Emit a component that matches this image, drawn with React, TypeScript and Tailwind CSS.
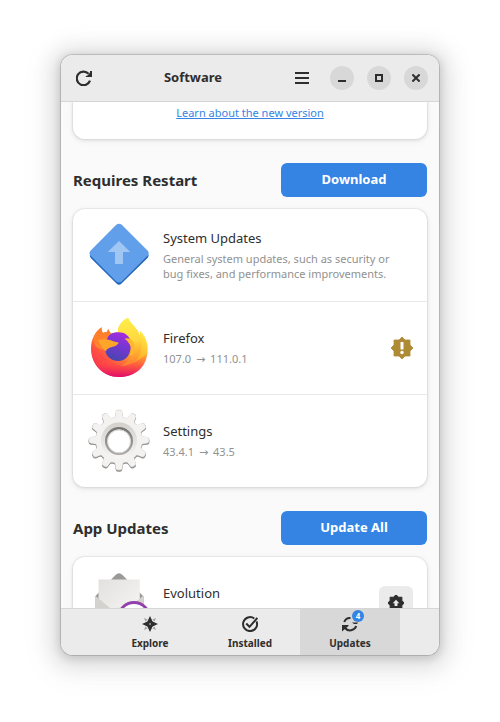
import type { ReactNode } from "react";

const toothAngles = [0, 30, 60, 90, 120, 150, 180, 210, 240, 270, 300, 330];

function ReloadIcon() {
  return (
    <svg viewBox="0 0 16 16" className="size-4" fill="none" aria-hidden="true">
      <path d="M14 10.600A6.800 6.800 0 1 1 12.600 3.800" stroke="#2e2e2e" strokeWidth="2.200" />
      <path d="M16 1v6H9.800V6l1.800-.6L14 2.600V1z" fill="#2e2e2e" />
    </svg>
  );
}

function MenuIcon() {
  return (
    <svg viewBox="0 0 16 16" className="size-4" fill="#2e2e2e" aria-hidden="true">
      <path d="M1 2h14v2H1zM1 7h14v2H1zM1 12h14v2H1z" />
    </svg>
  );
}

function SystemIcon() {
  return (
    <svg viewBox="0 0 64 64" className="size-16 shrink-0" aria-hidden="true">
      <path d="M29.500 3.800q2.500-2.400 5 0L60.300 30q2.600 2.600 0 5.200L34.500 60.600q-2.500 2.400-5 0L4 35.200q-2.400-2.600 0-5.200z" fill="#1f66bd" />
      <path d="M29 2q3-2.600 6 0L60.500 27.600q2.400 2.600 0 5.200L35 58.200q-3 2.600-6 0L3.700 32.800q-2.400-2.600 0-5.200z" fill="#629fea" />
      <path d="M32 18l11.300 11H36v12h-8V29h-7.300z" fill="#a0c6f3" />
    </svg>
  );
}

function FirefoxIcon() {
  return (
    <svg viewBox="0 0 64 64" className="size-16 shrink-0" aria-hidden="true">
      <defs>
        <linearGradient id="fxBody" x1="54" y1="12" x2="16" y2="56" gradientUnits="userSpaceOnUse">
          <stop offset="0" stopColor="#fff04a" />
          <stop offset=".35" stopColor="#ffb92c" />
          <stop offset=".6" stopColor="#ff7a35" />
          <stop offset=".85" stopColor="#ff4548" />
          <stop offset="1" stopColor="#f01a62" />
        </linearGradient>
        <linearGradient id="fxFlame" x1="40" y1="2" x2="48" y2="52" gradientUnits="userSpaceOnUse">
          <stop offset="0" stopColor="#ffee4a" />
          <stop offset=".45" stopColor="#ffd93e" />
          <stop offset=".75" stopColor="#ffa32f" />
          <stop offset="1" stopColor="#ff6a36" />
        </linearGradient>
        <linearGradient id="fxGlobe" x1="38" y1="18" x2="28" y2="44" gradientUnits="userSpaceOnUse">
          <stop offset="0" stopColor="#a52be0" />
          <stop offset=".5" stopColor="#7238cf" />
          <stop offset="1" stopColor="#4a45b0" />
        </linearGradient>
        <linearGradient id="fxLow" x1="32" y1="34" x2="32" y2="61" gradientUnits="userSpaceOnUse">
          <stop offset="0" stopColor="#ff6a30" stopOpacity="0" />
          <stop offset=".55" stopColor="#ff4a43" stopOpacity=".7" />
          <stop offset="1" stopColor="#e00c6c" />
        </linearGradient>
        <linearGradient id="fxHead" x1="14" y1="12" x2="20" y2="34" gradientUnits="userSpaceOnUse">
          <stop offset="0" stopColor="#ff7a2c" />
          <stop offset="1" stopColor="#ff8a2a" />
        </linearGradient>
      </defs>
      <path
        d="M14.600 11.200C14.500 14 15 15.500 16 17c1.500-.8 2.600-1 3.800-1 .2-1 1-2 2-2.700.2 1.800 1.200 3 2.200 4.200 2.200-.8 4.500-.8 7-.8C30.500 10 34.500 5 41 1.700c2 5.300 7 8 10 13.800.8 1.600 1.400 3.100 1.700 4.500.3-2.300.2-3.500-.2-5.500 5.500 4.500 8.200 11.500 8.200 18.500C60.700 49 48.500 61 32.300 61 16 61 4 48.500 4 32.500 4 23.500 8 15.500 14.600 11.200z"
        fill="url(#fxBody)"
      />
      <path d="M4.200 30C10 41 20 48 32 49c13 .5 22-5 28.500-13C60 51 48 61 32.300 61 15.500 61 3.500 48 4.200 30z" fill="url(#fxLow)" />
      <path
        d="M31 17C30.500 10 34.500 5 41 1.700c2 5.300 7 8 10 13.800 3.500 7 4 13.500 2.500 19.500C51 44.500 43 50.500 33 50c8-3 12.500-8 13-15C46.500 28 43 20 31 17z"
        fill="url(#fxFlame)"
      />
      <path d="M19.500 29c-1.500-6 2-11.500 7.500-12.300 4.500-.9 9.500-.5 12.500 2 4.500 3.500 5.500 9.300 4 14.800C42 41 37.500 45 31.500 45c-7 0-12.500-4.500-13.200-10.500-.2-2 .2-4 1.200-5.500z" fill="url(#fxGlobe)" />
      <path d="M37.500 23c2.500-1.300 5.500-.6 7.500 1.500 3.500 4 3.300 9.500.7 14.500-1 .5-2.500.5-3 0 2-5 1.600-9-1.700-13-.8-1.400-2-2.500-3.500-3z" fill="#ffb52e" />
      <path
        d="M11 24c3.500-1 7-.9 10.500-.3 3 .6 6.500 2.300 10.200 2.800-1 2.500-3 3.600-6 4.300-3.500.8-5.500 2-7 4.500C15.500 32 12.500 29 11 24z"
        fill="#ffa62a"
      />
      <path d="M14.600 11.200C14.500 14 15 15.500 16 17c1.500-.8 2.600-1 3.800-1 .2-1 1-2 2-2.700.2 1.800 1.200 3 2.200 4.200-3 2-4 4-3.800 6-3-.6-6-.3-9.200.5 1 4 3.500 7 6.500 10C9.500 33 6 29 6.500 22 8 17 10.500 14 14.600 11.200z" fill="url(#fxHead)" />
    </svg>
  );
}

function GearTeeth({ fill, dy }: { fill: string; dy: number }) {
  return (
    <g fill={fill} transform={`translate(0 ${dy})`}>
      {toothAngles.map((a) => (
        <path
          key={a}
          transform={`rotate(${a} 32 31)`}
          d="M26 9.500q2-.6 2.300-3l.4-3.500Q29 .6 31 .6h2q2 0 2.300 2.400l.4 3.500q.3 2.400 2.300 3z"
        />
      ))}
      <circle cx="32" cy="31" r="23.500" />
    </g>
  );
}

function SettingsIcon() {
  return (
    <svg viewBox="0 0 64 64" className="size-16 shrink-0" aria-hidden="true">
      <defs>
        <linearGradient id="gearRing" x1="0" y1="0" x2="0" y2="1">
          <stop offset="0" stopColor="#d3d0cc" />
          <stop offset=".5" stopColor="#e4e2df" />
          <stop offset="1" stopColor="#f6f5f4" />
        </linearGradient>
        <linearGradient id="gearEdge" x1="0" y1="0" x2="0" y2="1">
          <stop offset="0" stopColor="#777572" />
          <stop offset="1" stopColor="#a9a7a4" />
        </linearGradient>
      </defs>
      <GearTeeth fill="#8f8d8a" dy={1.4} />
      <GearTeeth fill="#c5c3c0" dy={0.2} />
      <g transform="translate(.6 .6) scale(.981)">
        <GearTeeth fill="#f3f2f0" dy={0} />
      </g>
      <circle cx="32" cy="31.500" r="18" fill="url(#gearRing)" />
      <circle cx="32" cy="32" r="12.800" fill="#fff" stroke="url(#gearEdge)" strokeWidth="2.400" />
      <circle cx="32" cy="32.500" r="11.500" fill="none" stroke="#d8d7d5" strokeWidth="1" />
    </svg>
  );
}

function EvolutionIcon() {
  return (
    <svg viewBox="0 0 64 64" className="size-16 shrink-0" aria-hidden="true">
      <defs>
        <linearGradient id="letter" x1="0" y1="0" x2="1" y2="1">
          <stop offset="0" stopColor="#e2e1de" />
          <stop offset="1" stopColor="#f7f6f5" />
        </linearGradient>
      </defs>
      <path d="M8 25.500 28.500 4q3.500-3.500 7 0L56.500 25.500V54H8z" fill="#9a9996" />
      <path d="M11.500 8.500h41.300V46H11.500z" fill="url(#letter)" />
      <path d="M8 24.500l24 20 24.500-20V56q0 4-4 4H12q-4 0-4-4z" fill="#d3d2ce" />
      <path d="M8 56l20.500-18.500q3.500-2.500 7 0L56.500 56q0 4-4 4H12q-4 0-4-4z" fill="#e6e5e2" />
      <circle cx="47" cy="47" r="15.500" fill="#fff" stroke="#9141ac" strokeWidth="2.800" />
      <path d="M47 39v8l5 3" fill="none" stroke="#9141ac" strokeWidth="2" />
    </svg>
  );
}

const badgePath = "M11 0l3 3h5v5l3 3-3 3v5h-5l-3 3-3-3H3v-5l-3-3 3-3V3h5z";

function WarningIcon() {
  return (
    <svg viewBox="0 0 22 22" className="size-[22px] shrink-0" role="img" aria-label="Warning">
      <path d={badgePath} fill="#ae8a34" stroke="#ae8a34" strokeWidth=".8" strokeLinejoin="round" />
      <path d="M9.500 5h3v7.500h-3z" fill="#fff" />
      <circle cx="11" cy="15.500" r="1.700" fill="#fff" />
    </svg>
  );
}

function InstallIcon() {
  return (
    <svg viewBox="0 0 22 22" className="size-4" aria-hidden="true">
      <path d={badgePath} fill="#2e2e2e" stroke="#2e2e2e" strokeWidth="1.500" strokeLinejoin="round" />
      <path d="M11 6.500l4.500 5h-2.500V15H9v-3.500H6.500z" fill="#ebebeb" />
    </svg>
  );
}

function ExploreIcon() {
  return (
    <svg viewBox="0 0 16 16" className="size-4" aria-hidden="true">
      <path d="M2 2l3.500 1.500-2 2zM14 2l-1.500 3.500-2-2zM2 14l1.500-3.500 2 2zM14 14l-3.500-1.500 2-2z" fill="#a0a0a0" />
      <path d="M8 0l2.600 5.400L16 8l-5.400 2.600L8 16l-2.600-5.400L0 8l5.400-2.600z" fill="#2e2e2e" />
      <circle cx="8" cy="8" r=".8" fill="#ebebeb" />
    </svg>
  );
}

function InstalledIcon() {
  return (
    <svg viewBox="0 0 16 16" className="size-4" fill="none" stroke="#2e2e2e" strokeWidth="2" aria-hidden="true">
      <path d="M14.500 5.300A7 7 0 1 1 12.300 2.500" />
      <path d="M4.200 7.500l3.300 3.300L15.300 2" />
    </svg>
  );
}

function UpdatesIcon() {
  return (
    <svg viewBox="0 0 16 16" className="size-4" fill="none" aria-hidden="true">
      <path d="M2.200 6A6.200 6.200 0 0 1 8.500 2" stroke="#2e2e2e" strokeWidth="2" />
      <path d="M10 6.500h6L15 8h-3z" fill="#2e2e2e" />
      <path d="M14.200 10A6.500 6.500 0 0 1 3 12" stroke="#2e2e2e" strokeWidth="2" />
      <path d="M0 15.500V9h6.500v1z" fill="#2e2e2e" />
    </svg>
  );
}

function WindowButton({ label, children }: { label: string; children: ReactNode }) {
  return (
    <button type="button" aria-label={label} className="flex size-6 items-center justify-center rounded-full bg-[#d8d8d8]">
      <svg viewBox="0 0 8 8" className="size-2" fill="none" stroke="#2e2e2e" strokeWidth="2" aria-hidden="true">
        {children}
      </svg>
    </button>
  );
}

function SectionHeader({ title, action }: { title: string; action: string }) {
  return (
    <div className="mt-6 mb-3 flex items-center justify-between">
      <h2 className="text-[15px] font-bold">{title}</h2>
      <button type="button" className="h-[34px] w-[146px] rounded-md bg-[#3584e4] text-[13px] font-bold text-white">
        {action}
      </button>
    </div>
  );
}

function VersionChange({ from, to }: { from: string; to: string }) {
  return (
    <>
      {from} <span className="px-0.5 font-['DejaVu_Sans',sans-serif]">→</span> {to}
    </>
  );
}

const cardShadow = "shadow-[0_0_0_1px_rgba(0,0,0,0.04),0_1px_3px_1px_rgba(0,0,0,0.07),0_2px_6px_2px_rgba(0,0,0,0.03)]";

function AppRow({ icon, name, detail, trailing }: { icon: ReactNode; name: string; detail: ReactNode; trailing?: ReactNode }) {
  return (
    <li className="flex items-center gap-3 px-3.5 py-3.5">
      {icon}
      <div className="min-w-0 flex-1 pb-0.5">
        <h3 className="text-[13px] leading-5">{name}</h3>
        <p className="mt-[3px] max-w-60 text-[11px] leading-[15px] text-[#919191]">{detail}</p>
      </div>
      {trailing}
    </li>
  );
}

function Tab({ label, icon, badge, active }: { label: string; icon: ReactNode; badge?: string; active?: boolean }) {
  return (
    <button
      type="button"
      aria-current={active ? "page" : undefined}
      className={
        active
          ? "flex w-[100px] flex-col items-center gap-1 bg-[#d8d8d8] pt-[7px]"
          : "flex w-[100px] flex-col items-center gap-1 pt-[7px]"
      }
    >
      <span className="relative">
        {icon}
        {badge && (
          <span className="absolute -top-1.5 -right-1.5 flex size-3 items-center justify-center rounded-full bg-[#3584e4] text-[8px] leading-3 font-bold text-white">
            {badge}
          </span>
        )}
      </span>
      <span className="text-[10px] leading-[15px] font-bold">{label}</span>
    </button>
  );
}

export default function App() {
  return (
    <div className="flex h-screen flex-col bg-white px-[61px] pt-[55px] pb-[67px] font-['Noto_Sans',sans-serif] text-[#2e2e2e]">
      <main className="flex min-h-0 flex-1 flex-col overflow-hidden rounded-xl bg-[#fafafa] shadow-[0_0_0_1px_rgba(0,0,0,0.14),0_2px_8px_2px_rgba(0,0,0,0.13),0_3px_20px_10px_rgba(0,0,0,0.09),0_6px_32px_16px_rgba(0,0,0,0.04)]">
        <header className="flex h-[47px] shrink-0 items-center border-b border-[#d6d6d6] bg-[#ebebeb] pr-[11px] pl-1.5">
          <button type="button" aria-label="Refresh" className="flex size-[34px] items-center justify-center">
            <ReloadIcon />
          </button>
          <h1 className="flex-1 text-center text-[13px] font-bold">Software</h1>
          <button type="button" aria-label="Menu" className="flex size-[34px] items-center justify-center">
            <MenuIcon />
          </button>
          <div className="ml-[11px] flex gap-[13px]">
            <WindowButton label="Minimize">
              <path d="M0 7h8" />
            </WindowButton>
            <WindowButton label="Maximize">
              <path d="M1 1h6v6H1z" />
            </WindowButton>
            <WindowButton label="Close">
              <path d="M.4.4l7.200 7.200M7.600.4L.4 7.600" />
            </WindowButton>
          </div>
        </header>

        <div className="min-h-0 flex-1 overflow-hidden px-3">
          <section className={`rounded-b-xl bg-white pt-[3px] pb-[19px] text-center text-[11px] leading-[15px] ${cardShadow}`}>
            <a href="#new-version" className="text-[#3584e4] underline">
              Learn about the new version
            </a>
          </section>

          <section>
            <SectionHeader title="Requires Restart" action="Download" />
            <ul className={`divide-y divide-[#e8e8e8] rounded-xl bg-white ${cardShadow}`}>
              <AppRow
                icon={<SystemIcon />}
                name="System Updates"
                detail="General system updates, such as security or bug fixes, and performance improvements."
              />
              <AppRow icon={<FirefoxIcon />} name="Firefox" detail={<VersionChange from="107.0" to="111.0.1" />} trailing={<WarningIcon />} />
              <AppRow icon={<SettingsIcon />} name="Settings" detail={<VersionChange from="43.4.1" to="43.5" />} />
            </ul>
          </section>

          <section>
            <SectionHeader title="App Updates" action="Update All" />
            <ul className={`rounded-xl bg-white ${cardShadow}`}>
              <AppRow
                icon={<EvolutionIcon />}
                name="Evolution"
                detail={<br />}
                trailing={
                  <button type="button" aria-label="Update" className="flex size-[34px] items-center justify-center rounded-md bg-[#ebebeb]">
                    <InstallIcon />
                  </button>
                }
              />
            </ul>
          </section>
        </div>

        <nav className="flex h-[47px] shrink-0 justify-center border-t border-[#d6d6d6] bg-[#ebebeb]">
          <Tab label="Explore" icon={<ExploreIcon />} />
          <Tab label="Installed" icon={<InstalledIcon />} />
          <Tab label="Updates" icon={<UpdatesIcon />} badge="4" active />
        </nav>
      </main>
    </div>
  );
}
